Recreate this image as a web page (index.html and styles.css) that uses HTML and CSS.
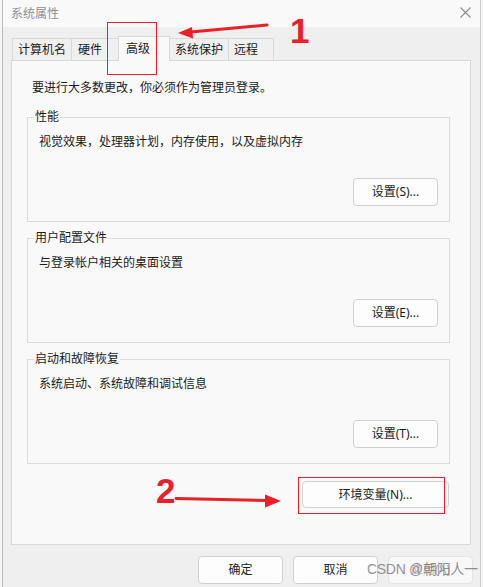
FILE: index.html
```html
<!DOCTYPE html>
<html lang="zh-CN">
<head>
<meta charset="utf-8">
<title>系统属性</title>
<link rel="stylesheet" href="styles.css">
</head>
<body>
<div class="window">
  <div class="titlebar">
    <span class="title">系统属性</span>
    <svg class="close" width="11" height="11" viewBox="0 0 11 11"><path d="M0.5 0.5L10.5 10.5M10.5 0.5L0.5 10.5" stroke="#8c8c8c" stroke-width="1.1" fill="none"/></svg>
  </div>
  <div class="content">
    <div class="tabs">
      <div class="tab t1">计算机名</div>
      <div class="tab t2">硬件</div>
      <div class="tab t3 active">高级</div>
      <div class="tab t4">系统保护</div>
      <div class="tab t5">远程</div>
    </div>
    <div class="panel">
      <p class="intro">要进行大多数更改，你必须作为管理员登录。</p>
      <div class="group">
        <span class="group-title">性能</span>
        <p class="desc">视觉效果，处理器计划，内存使用，以及虚拟内存</p>
        <div class="btn-row"><button class="btn">设置(S)...</button></div>
      </div>
      <div class="group">
        <span class="group-title">用户配置文件</span>
        <p class="desc">与登录帐户相关的桌面设置</p>
        <div class="btn-row"><button class="btn">设置(E)...</button></div>
      </div>
      <div class="group">
        <span class="group-title">启动和故障恢复</span>
        <p class="desc">系统启动、系统故障和调试信息</p>
        <div class="btn-row"><button class="btn">设置(T)...</button></div>
      </div>
      <div class="env-row"><button class="btn btn-env">环境变量(N)...</button></div>
    </div>
    <div class="footer">
      <button class="btn">确定</button>
      <button class="btn">取消</button>
      <button class="btn disabled">应用(A)</button>
    </div>
  </div>
</div>
<div class="watermark">CSDN @朝阳人一</div>
<svg class="annot" width="483" height="587" viewBox="0 0 483 587">
  <rect x="107.5" y="22.5" width="49" height="52" fill="none" stroke="#e8202a" stroke-width="1"/>
  <rect x="298.5" y="477.5" width="146" height="36" fill="none" stroke="#e8202a" stroke-width="1"/>
  <line x1="267" y1="25" x2="188" y2="32.2" stroke="#e8202a" stroke-width="3" stroke-linecap="round"/>
  <polygon points="178,33 192,27 193,38.5" fill="#e8202a"/>
  <line x1="176" y1="498.5" x2="268" y2="500.5" stroke="#e8202a" stroke-width="3" stroke-linecap="round"/>
  <polygon points="281,501 265,494.5 265,507.5" fill="#e8202a"/>
  <text x="290" y="43" class="num">1</text>
  <text x="156" y="503" class="num">2</text>
</svg>
</body>
</html>
```

FILE: styles.css
```css
* { box-sizing: border-box; }
html, body {
  margin: 0;
  padding: 0;
}
body {
  width: 483px;
  height: 587px;
  overflow: hidden;
  background: #f6f6f6;
  position: relative;
  font-family: "Noto Sans", "Noto Sans CJK SC", sans-serif;
  font-size: 12px;
  color: #1b1b1b;
}
p { margin: 0; }

.window {
  margin-left: 2px;
  width: 479px;
  height: 587px;
  border-left: 1px solid #bcbcbc;
  border-right: 1px solid #cdcdcd;
  background: #efefef;
}
.titlebar {
  height: 27px;
  background: #f9f9f9;
  display: flex;
  align-items: center;
  justify-content: space-between;
  padding: 0 9px 0 8px;
}
.title {
  color: #8f8f8f;
  font-size: 12px;
  line-height: 17px;
}
.close { display: block; margin-top: -2px; }

.content {
  padding: 9px 0 0 8px;
}
.tabs {
  display: flex;
  align-items: flex-end;
  height: 24px;
  margin-left: 1px;
  position: relative;
  z-index: 2;
}
.tab {
  height: 22px;
  line-height: 21px;
  border: 1px solid #d9d9d9;
  border-bottom: none;
  background: #f0f0f0;
  padding-left: 5px;
  margin-left: -1px;
  white-space: nowrap;
}
.t1 { width: 60px; margin-left: 0; }
.t2 { width: 48px; padding-left: 6px; }
.t3 { width: 52px; padding-left: 7px; }
.t4 { width: 60px; }
.t5 { width: 46px; }
.tab.active {
  height: 25px;
  line-height: 23px;
  background: #f9f9f9;
  margin-bottom: -1px;
  position: relative;
  z-index: 3;
}

.panel {
  width: 460px;
  height: 485px;
  border: 1px solid #d9d9d9;
  background: #f9f9f9;
  padding: 18px 20px 0 15px;
  position: relative;
  z-index: 1;
}
.intro {
  line-height: 17px;
  margin-left: 5px;
}
.group {
  position: relative;
  height: 105px;
  border: 1px solid #dcdcdc;
  padding: 15px 11px 0 11px;
  margin-top: 16px;
}
.intro + .group { margin-top: 21px; }
.group-title {
  position: absolute;
  top: -10px;
  left: 6px;
  padding: 0 1px;
  background: #f9f9f9;
  line-height: 17px;
}
.desc { line-height: 17px; }
.btn-row {
  display: flex;
  justify-content: flex-end;
  margin-top: 28px;
}
.btn {
  width: 85px;
  height: 28px;
  border: 1px solid #d0d0d0;
  border-radius: 4px;
  background: #fdfdfd;
  font-family: inherit;
  font-size: 12px;
  color: #1b1b1b;
  padding: 0;
  line-height: 24px;
}
.env-row {
  display: flex;
  justify-content: flex-end;
  margin-top: 17px;
  margin-right: 1px;
}
.btn-env { width: 147px; height: 27px; }

.footer {
  display: flex;
  justify-content: flex-end;
  gap: 10px;
  margin-top: 11px;
  padding-right: 7px;
}
.footer .btn { height: 28px; }
.btn.disabled {
  border-color: #e4e4e4;
  color: #b3b3b3;
  background: #f8f8f8;
}

.watermark {
  position: absolute;
  z-index: 9;
  left: 367px;
  top: 561px;
  font-family: "Liberation Sans", "Noto Sans CJK SC", sans-serif;
  font-size: 14px;
  line-height: 17px;
  letter-spacing: -0.3px;
  color: rgba(110, 110, 110, 0.75);
  white-space: nowrap;
}
.annot {
  position: absolute;
  z-index: 10;
  left: 0;
  top: 0;
  pointer-events: none;
}
.num {
  font-family: "Liberation Sans", sans-serif;
  font-size: 35px;
  font-weight: bold;
  fill: #e8202a;
}
```
